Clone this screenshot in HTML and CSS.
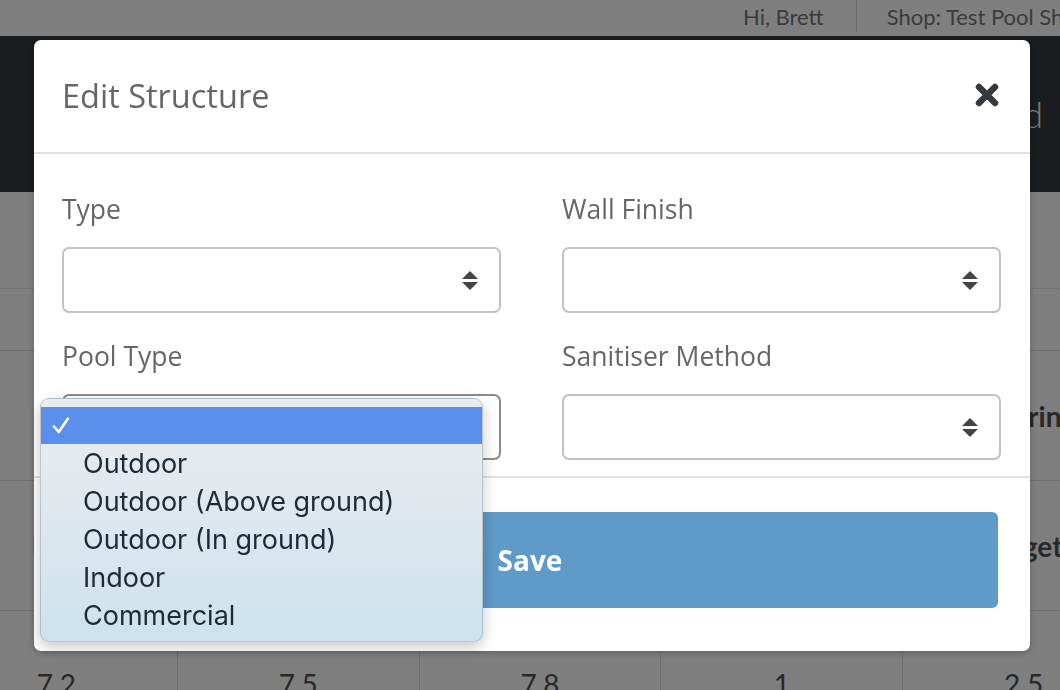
FILE: index.html
```html
<!DOCTYPE html>
<html lang="en">
<head>
    <meta charset="UTF-8">
    <meta name="viewport" content="width=device-width, initial-scale=1.0">
    <title>Edit Structure</title>
    <link rel="stylesheet" href="styles.css">
</head>
<body>

<div class="page">
    <div class="topbar">
        <span class="topbar-item">Hi, Brett</span>
        <span class="topbar-item shop">Shop: Test Pool Shop</span>
    </div>

    <header class="masthead">
        <h1>Pool Record</h1>
    </header>

    <div class="toolbar"></div>

    <table class="readings">
        <tr class="head">
            <th>pH</th>
            <th>Alkalinity</th>
            <th>Calcium</th>
            <th>Stabiliser</th>
            <th>Chlorine</th>
        </tr>
        <tr class="head">
            <th>Min</th>
            <th>Ideal</th>
            <th>Max</th>
            <th>Low</th>
            <th>Target</th>
        </tr>
        <tr class="values">
            <td>7.2</td>
            <td>7.5</td>
            <td>7.8</td>
            <td>1</td>
            <td>2.5</td>
        </tr>
    </table>
</div>

<div class="backdrop">
    <div class="modal">
        <div class="modal-header">
            <h2>Edit Structure</h2>
            <button class="close" type="button" aria-label="Close">
                <svg width="24" height="24" viewBox="0 0 24 24">
                    <path d="M4 4L20 20M20 4L4 20" stroke="#343a40" stroke-width="6.5" stroke-linecap="round" fill="none"/>
                </svg>
            </button>
        </div>

        <div class="modal-body">
            <div class="form-group">
                <label for="type">Type</label>
                <div class="select"><span class="arrows"></span></div>
            </div>
            <div class="form-group">
                <label for="wallFinish">Wall Finish</label>
                <div class="select"><span class="arrows"></span></div>
            </div>
            <div class="form-group">
                <label for="poolType">Pool Type</label>
                <div class="select is-open">
                    <span class="arrows"></span>
                    <ul class="options">
                        <li class="selected">
                            <svg class="check" width="18" height="17" viewBox="0 0 18 17">
                                <path d="M2 9.5L6.8 15L16 1.5" stroke="#fff" stroke-width="2.6" stroke-linecap="round" stroke-linejoin="round" fill="none"/>
                            </svg>
                        </li>
                        <li>Outdoor</li>
                        <li>Outdoor (Above ground)</li>
                        <li>Outdoor (In ground)</li>
                        <li>Indoor</li>
                        <li>Commercial</li>
                    </ul>
                </div>
            </div>
            <div class="form-group">
                <label for="sanitiser">Sanitiser Method</label>
                <div class="select"><span class="arrows"></span></div>
            </div>
        </div>

        <div class="modal-footer">
            <button class="save" type="submit">Save</button>
        </div>
    </div>
</div>

</body>
</html>
```

FILE: styles.css
```css
* {
    box-sizing: border-box;
}
html, body {
    margin: 0;
    height: 100%;
}
body {
    font-family: "Open Sans", Lato, sans-serif;
    background-color: #fff;
    overflow: hidden;
}

/* page behind the dialog (scrolled a little to the right) */
.page {
    width: 1210px;
    margin-left: -65px;
    font-family: Lato, "Open Sans", sans-serif;
}
.topbar {
    height: 36px;
    display: flex;
    align-items: stretch;
    padding-left: 808px;
    padding-bottom: 4px;
    font-size: 22px;
    color: #777;
    white-space: nowrap;
}
.topbar-item {
    display: flex;
    align-items: center;
    padding-right: 32px;
}
.topbar-item.shop {
    border-left: 1px solid #d8d8d8;
    padding-left: 30px;
}
.masthead {
    height: 156px;
    background-color: #343a40;
    display: flex;
    justify-content: flex-end;
    align-items: center;
    padding-right: 102px;
}
.masthead h1 {
    margin: 0;
    font-size: 36px;
    font-weight: 300;
    color: #f2f2f2;
}
.toolbar {
    height: 97px;
    border-bottom: 1px dotted #d2d2d2;
    margin-bottom: 61px;
}
.readings {
    width: 1210px;
    border-collapse: collapse;
    table-layout: fixed;
}
.readings th, .readings td {
    border: 1px solid #dcdcdc;
    text-align: center;
    color: #505050;
    font-size: 28px;
}
.readings .head th {
    height: 130px;
    font-weight: 700;
    vertical-align: middle;
}
.readings .values td {
    height: 130px;
    vertical-align: top;
    padding-top: 56px;
    line-height: 34px;
}

/* dialog */
.backdrop {
    position: fixed;
    top: 0;
    left: 0;
    right: 0;
    bottom: 0;
    background-color: rgba(0, 0, 0, 0.5);
    padding: 40px 0 0 34px;
}
.modal {
    width: 996px;
    background-color: #fff;
    border-radius: 7px;
    box-shadow: 0 2px 6px rgba(0, 0, 0, 0.25);
}
.modal-header {
    height: 114px;
    display: flex;
    justify-content: space-between;
    align-items: center;
    padding: 0 31px 2px 28px;
    border-bottom: 2px solid #dee2e6;
}
.modal-header h2 {
    margin: 0;
    font-size: 32.5px;
    font-weight: 400;
    color: #666;
}
.close {
    border: none;
    background: none;
    padding: 0;
    width: 24px;
    height: 24px;
    display: flex;
}
.modal-body {
    display: grid;
    grid-template-columns: 439px 439px;
    column-gap: 61px;
    row-gap: 24px;
    padding: 36px 29px 16px 28px;
}
.form-group label {
    display: block;
    font-size: 26.5px;
    line-height: 38px;
    color: #666;
    margin-bottom: 19px;
}
.select {
    position: relative;
    height: 66px;
    border: 2px solid #c2c2c2;
    border-radius: 7px;
    background-color: #fff;
}
.select.is-open {
    border-color: #8c8c8c;
}
/* up / down carets on the right of each select */
.arrows {
    position: absolute;
    right: 21px;
    top: 22px;
    width: 16px;
    height: 19px;
}
.arrows::before, .arrows::after {
    content: "";
    position: absolute;
    left: 0;
    border-left: 8px solid transparent;
    border-right: 8px solid transparent;
}
.arrows::before {
    top: 0;
    border-bottom: 8px solid #444;
}
.arrows::after {
    bottom: 0;
    border-top: 8px solid #444;
}

/* open option list of the pool type select */
.options {
    position: absolute;
    top: 2px;
    left: -24px;
    width: 443px;
    margin: 0;
    padding: 8px 0 7px;
    list-style: none;
    border: 1px solid rgba(0, 0, 0, 0.16);
    border-radius: 9px;
    background: linear-gradient(180deg, #eaecee 0%, #dfe8ee 45%, #cce2ef 100%);
    box-shadow: 0 5px 14px rgba(0, 0, 0, 0.22);
    font-family: Inter, "Noto Sans", sans-serif;
    font-size: 27px;
    color: #1c2b36;
}
.options li {
    height: 38px;
    line-height: 39px;
    padding-left: 42px;
    position: relative;
    white-space: nowrap;
}
.options li.selected {
    height: 37px;
    background-color: #5a8fec;
}
.check {
    position: absolute;
    left: 11px;
    top: 10px;
}

.modal-footer {
    border-top: 2px solid #dee2e6;
    padding: 34px 32px 43px 28px;
}
.save {
    display: block;
    width: 100%;
    height: 96px;
    border: none;
    border-radius: 6px;
    background-color: #5f9ac8;
    color: #fff;
    font-family: "Open Sans", sans-serif;
    font-size: 28px;
    font-weight: 700;
    cursor: pointer;
}
```
